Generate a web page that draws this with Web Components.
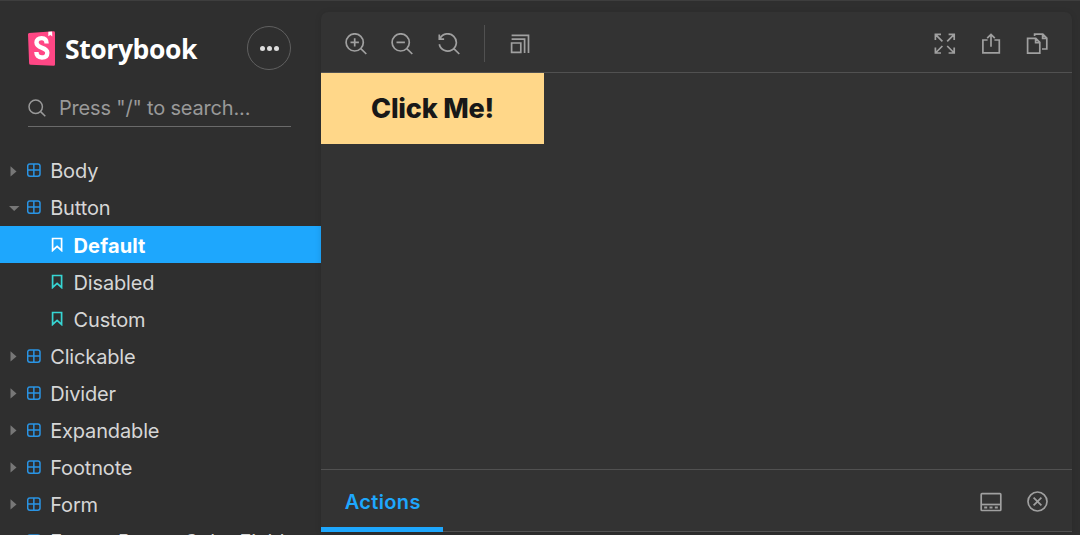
<!DOCTYPE html>
<html lang="en">
<head>
<meta charset="utf-8">
<title>Storybook</title>
<style>
html,body{margin:0;height:100%;overflow:hidden;background:#2f2f2f}
body{font-family:Inter,"Liberation Sans",sans-serif}
</style>
</head>
<body>
<sb-app></sb-app>
<script>
const ICONS = {
  search:'<circle cx="7.7" cy="7.7" r="6.7"/><path d="M12.6 12.6 17.3 17.3"/>',
  zoomin:'<circle cx="9.7" cy="9.4" r="8.6"/><path d="M15.8 15.6 21.3 21M9.7 5.2v8.4M5.5 9.4h8.4"/>',
  zoomout:'<circle cx="9.7" cy="9.4" r="8.6"/><path d="M15.8 15.6 21.3 21M5.5 9.4h8.4"/>',
  zoomreset:'<path d="M2.1 5.4A8.6 8.6 0 1 1 1.3 11.2M1.3 1.5v4.6h4.8M15.8 15.6 21.3 21"/>',
  grow:'<path d="M1.6 9h9.2v9.3H1.6zM1.6 5.2h13v13.9M1.6 1.4h16.9v17.7"/>',
  expand:'<path d="M1.4 7V1.4H7M1.4 1.4l7 7M14.6 1.4h5.6V7M20.2 1.4l-7 7M1.4 14.4V20H7M1.4 20l7-7M14.6 20h5.6v-5.6M20.2 20l-7-7"/>',
  share:'<path d="M6.6 7H1.9v12.9h16.4V7h-4.9M10 13.8V1.6M6.2 5.2 10 1.5l3.8 3.7"/>',
  copy:'<path d="M1.6 5.4h8.2l4 4v10.8H1.6zM9.6 5.4v4.2h4.2M8.6 3V1.2h8.2l4 4v10.8H16M16.6 1.2v4.2h4.2"/>',
  bottombar:'<rect x="1.2" y="1.7" width="19.6" height="16.8" rx=".8"/><path d="M1 12.5h19.6"/><path d="M4.2 15.6h3M9.5 15.6h3M14.8 15.6h3" stroke-width="2"/>',
  close:'<circle cx="10.5" cy="10.5" r="9.5"/><path d="m6.6 6.6 7.8 7.8m0-7.8-7.8 7.8"/>',
  component:'<rect x=".7" y=".9" width="12.3" height="12.3" rx="2.2"/><path d="M6.85.9V13.2M.7 7.05H13"/>',
  bookmark:'<path d="M1.6 1.5h9v12L6.1 9.4l-4.5 4.1z"/>'
};
class SbIcon extends HTMLElement{
  connectedCallback(){
    const w=this.getAttribute('w')||22,h=this.getAttribute('h')||w,s=this.getAttribute('s')||1.7;
    this.attachShadow({mode:'open'}).innerHTML=`<style>:host{display:block;flex:none;width:${w}px;height:${h}px}svg{display:block}</style><svg width="${w}" height="${h}" fill="none" stroke="currentColor" stroke-width="${s}">${ICONS[this.getAttribute('name')]}</svg>`;
  }
}
customElements.define('sb-icon',SbIcon);

class SbNode extends HTMLElement{
  connectedCallback(){
    const k=this.getAttribute('kind')||'closed',leaf=k==='story'||k==='selected';
    this.attachShadow({mode:'open'}).innerHTML=`<style>
:host{display:flex;flex:none;box-sizing:border-box;align-items:center;height:37.1px;padding-left:${leaf?51:9}px;color:${k==='selected'?'#fff':'#d6d6d6'};background:${k==='selected'?'#1ea7fd':'none'};font-size:20px;font-weight:${k==='selected'?700:400};letter-spacing:${k==='selected'?.15:-.15}px;white-space:nowrap}
.arrow{width:11px;height:12px;flex:none;margin-right:7px}
span{padding-top:1.6px}
sb-icon{color:${k==='selected'?'#fff':leaf?'#37d5d3':'#2a94e4'};margin-right:${leaf?10.5:9.2}px;${leaf?'':'margin-bottom:1px'}}
</style>${leaf?'<sb-icon name="bookmark" w="12" h="15" s="1.7"></sb-icon>':`<svg class="arrow" fill="#777"><path d="${k==='open'?'M0 3.9h10.5l-5.3 5z':'M1.5 1.2v10.4l6-5.2z'}"/></svg><sb-icon name="component" w="14" s="1.5"></sb-icon>`}<span><slot></slot></span>`;
  }
}
customElements.define('sb-node',SbNode);

class SbSidebar extends HTMLElement{
  connectedCallback(){
    this.attachShadow({mode:'open'}).innerHTML=`<style>
:host{display:flex;flex-direction:column;width:321px;flex:none;overflow:hidden}
header{display:flex;align-items:center;height:44px;margin:25px 30px 0 27px;flex:none}
.logo{flex:none;margin:2px 8px 0 0}
.word{font:700 26.5px "Open Sans",sans-serif;color:#fff;flex:1;letter-spacing:-.4px;padding-top:1px}
.menu{box-sizing:border-box;width:44px;height:44px;border:1.5px solid #606060;border-radius:50%;display:flex;align-items:center;justify-content:center;gap:2px}
.menu i{width:5px;height:5px;border-radius:50%;background:#ddd}
.search{display:flex;align-items:center;box-sizing:border-box;height:37px;margin:20px 30px 25px 27.5px;border-bottom:1.5px solid #6a6a6a;color:#999;font-size:20px;letter-spacing:-.18px;gap:13px;flex:none}
.search sb-icon{margin:0 0 1px .5px}
</style>
<header><svg class="logo" width="30" height="36"><path d="M1 3.2Q1 2 2.2 1.9L26.5.3Q28 .2 28 1.7v31.7q0 1.5-1.5 1.4L3.7 33.8Q2.2 33.7 2.1 32.2z" fill="#ff4785"/><path d="m21.3.7 3.8-.3.2 5-2-1.4-2 1.3z" fill="#fff"/><path d="M19.6 12.4c0-3.8-1.8-5.3-5-5.3-3.3 0-5.1 1.7-5.1 4.4 0 6.4 10.8 4.4 10.8 10.2 0 3.1-2 4.8-5.4 4.8-3.7 0-5.5-2-5.5-5.5" fill="none" stroke="#fff" stroke-width="4.4"/></svg><span class="word">Storybook</span><div class="menu"><i></i><i></i><i></i></div></header>
<div class="search"><sb-icon name="search" w="18" s="1.5"></sb-icon><span>Press "/" to search...</span></div>
<slot></slot>`;
  }
}
customElements.define('sb-sidebar',SbSidebar);

class SbToolbar extends HTMLElement{
  connectedCallback(){
    this.attachShadow({mode:'open'}).innerHTML=`<style>
:host{display:flex;align-items:center;box-sizing:border-box;height:61px;flex:none;padding:3px 24px 0;border-bottom:1.5px solid #515151;color:#a0a0a0;gap:24.3px}
hr{width:1px;height:37px;border:0;margin:-1px 0 0 .5px;background:#515151}
sb-icon[name=grow]{margin-left:.5px}
.sp{flex:1}
</style><sb-icon name="zoomin"></sb-icon><sb-icon name="zoomout"></sb-icon><sb-icon name="zoomreset"></sb-icon><hr><sb-icon name="grow" w="20"></sb-icon><div class="sp"></div><sb-icon name="expand"></sb-icon><sb-icon name="share" w="21" h="22"></sb-icon><sb-icon name="copy"></sb-icon>`;
  }
}
customElements.define('sb-toolbar',SbToolbar);

class SbPreview extends HTMLElement{
  connectedCallback(){
    this.attachShadow({mode:'open'}).innerHTML=`<style>
:host{display:block;flex:1}
button{display:block;width:223px;height:71px;padding:0;border:0;background:#ffd789;color:#181818;font:800 27px Inter,sans-serif;letter-spacing:-.2px}
</style><button><slot></slot></button>`;
  }
}
customElements.define('sb-preview',SbPreview);

class SbAddons extends HTMLElement{
  connectedCallback(){
    this.attachShadow({mode:'open'}).innerHTML=`<style>
:host{display:flex;box-sizing:border-box;height:63px;flex:none;border-top:1.5px solid #515151;border-bottom:1.5px solid #515151;align-items:center;padding-right:24px;color:#a0a0a0;gap:25px}
.tab{box-sizing:border-box;align-self:stretch;margin-bottom:-1px;width:122px;padding:6px 0 0 1.4px;border-bottom:5px solid #1ea7fd;display:flex;align-items:center;justify-content:center;color:#1ea7fd;font-weight:600;font-size:20px;letter-spacing:.35px}
.sp{flex:1}
sb-icon{margin-top:2px}
</style><div class="tab"><span><slot></slot></span></div><div class="sp"></div><sb-icon name="bottombar" w="22" h="20"></sb-icon><sb-icon name="close" w="21"></sb-icon>`;
  }
}
customElements.define('sb-addons',SbAddons);

class SbApp extends HTMLElement{
  connectedCallback(){
    this.attachShadow({mode:'open'}).innerHTML=`<style>
:host{display:flex;box-sizing:border-box;height:535px;border-top:1px solid #3e3e3e;overflow:hidden;background:#2f2f2f}
main{display:flex;flex-direction:column;width:751px;height:520px;margin-top:11px;background:#333;border-radius:7px 7px 0 0;box-shadow:0 1px 6px rgba(0,0,0,.12)}
</style>
<sb-sidebar><sb-node>Body</sb-node><sb-node kind="open">Button</sb-node><sb-node kind="selected">Default</sb-node><sb-node kind="story">Disabled</sb-node><sb-node kind="story">Custom</sb-node><sb-node>Clickable</sb-node><sb-node>Divider</sb-node><sb-node>Expandable</sb-node><sb-node>Footnote</sb-node><sb-node>Form</sb-node><sb-node>Form - Base - Color Field</sb-node></sb-sidebar>
<main><sb-toolbar></sb-toolbar><sb-preview>Click Me!</sb-preview><sb-addons>Actions</sb-addons></main>`;
  }
}
customElements.define('sb-app',SbApp);
</script>
</body>
</html>
